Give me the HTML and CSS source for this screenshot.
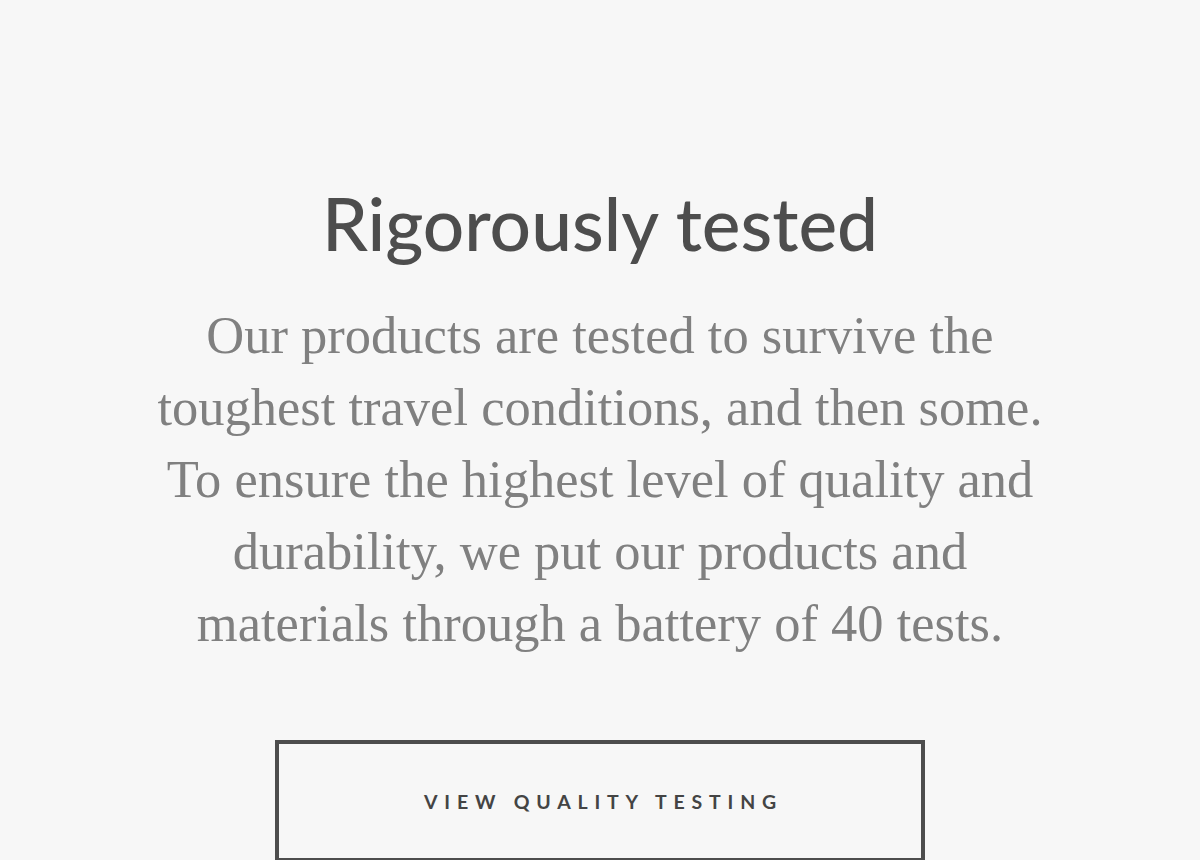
FILE: index.html
```html
<!DOCTYPE html>
<html lang="en">
<head>
  <meta charset="UTF-8">
  <meta name="viewport" content="width=device-width, initial-scale=1.0">
  <title>Rigorously tested</title>
  <link rel="stylesheet" href="styles.css">
</head>
<body>
  <!-- 品質テストの紹介 -->
  <section class="feature">
    <h2 class="feature-title">Rigorously tested</h2>
    <p class="feature-text">
      Our products are tested to survive the<br>
      toughest travel conditions, and then some.<br>
      To ensure the highest level of quality and<br>
      durability, we put our products and<br>
      materials through a battery of 40 tests.
    </p>
    <a href="#" class="outline-button">View quality testing</a>
  </section>
</body>
</html>
```

FILE: styles.css
```css
body {
  margin: 0;
  padding: 0;
  background-color: #f7f7f7;
}
.feature {
  padding-top: 178px;
  display: flex;
  flex-direction: column;
  align-items: center;
  text-align: center;
}
.feature-title {
  margin: 0;
  font-family: Lato, "Open Sans", sans-serif;
  font-size: 73px;
  font-weight: 500;
  line-height: 90px;
  color: #4d4d4d;
}
.feature-text {
  margin: 31px 0 0;
  font-family: "Liberation Serif", serif;
  font-size: 52.5px;
  line-height: 72px;
  color: #808080;
}
.outline-button {
  display: flex;
  align-items: center;
  justify-content: center;
  box-sizing: border-box;
  width: 650px;
  height: 122px;
  margin-top: 81px;
  padding-left: 7px;
  border: 4px solid #4d4d4d;
  font-family: Lato, "Open Sans", sans-serif;
  font-size: 19.5px;
  font-weight: 700;
  letter-spacing: 6.8px;
  text-transform: uppercase;
  color: #444;
  text-decoration: none;
}
```
